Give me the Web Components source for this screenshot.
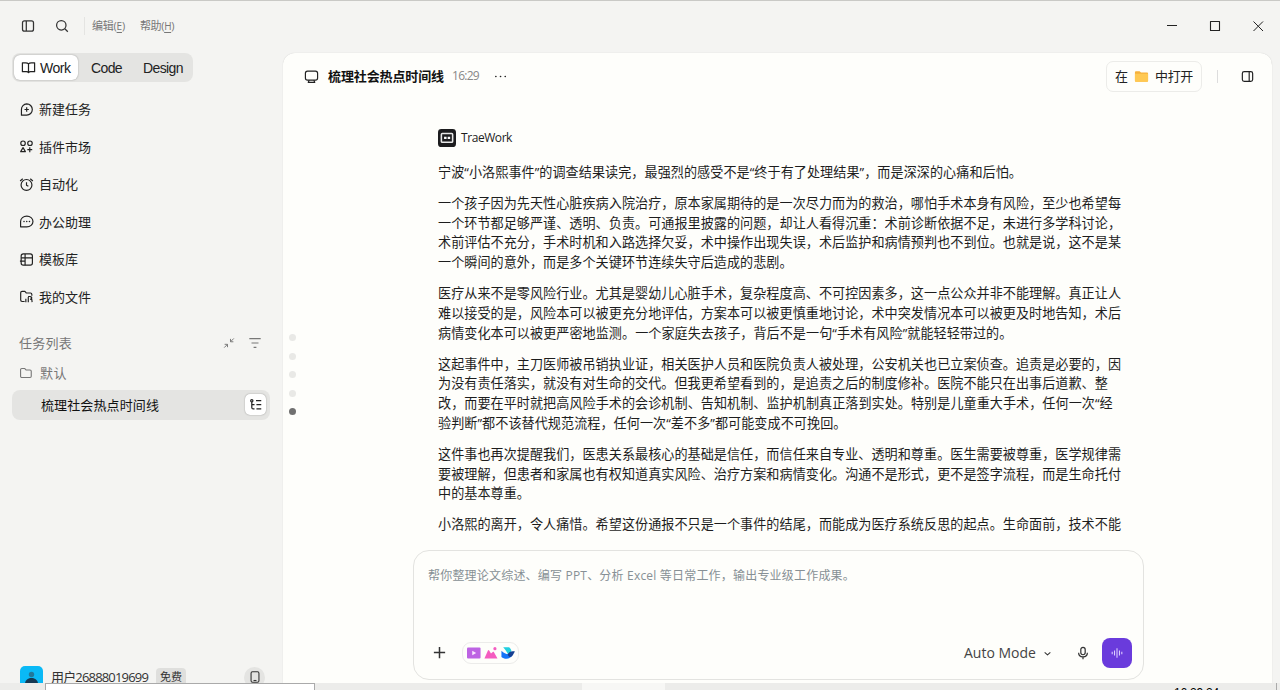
<!DOCTYPE html>
<html lang="zh-CN">
<head>
<meta charset="utf-8">
<title>TraeWork</title>
<style>
html,body{margin:0;height:100%;overflow:hidden}
body{font-family:"Open Sans","Noto Sans CJK SC",sans-serif;font-size:13px;color:#1d1d1d}
</style>
</head>
<body>
<work-app></work-app>
<script>
const define=(name,html,setup)=>customElements.define(name,class extends HTMLElement{
  connectedCallback(){
    if(this.shadowRoot)return;
    const t=document.createElement('template');
    t.innerHTML=typeof html==='function'?html(this):html;
    this.attachShadow({mode:'open'}).append(t.content.cloneNode(true));
    if(setup)setup(this);
  }
});

/* single line of text spaced to a fixed measure */
define('fit-text','<style>:host{display:block;white-space:nowrap;flex:none;line-height:20px}span{display:inline-block;white-space:pre}</style><span><slot></slot></span>',el=>{
  const w=+el.getAttribute('w'),s=el.shadowRoot.querySelector('span');
  el.style.width=w+'px';
  s.style.letterSpacing=(w-s.getBoundingClientRect().width)/[...el.textContent].length+'px';
});

const icons={
panel:'<rect x="2.5" y="2.8" width="11" height="10.4" rx="2"/><path d="M6.3 3v10"/>',
panelR:'<rect x="2.5" y="2.8" width="11" height="10.4" rx="2"/><path d="M9.8 3v10"/>',
search:'<circle cx="7.3" cy="7.3" r="4.7"/><path d="m10.8 10.8 3 3"/>',
book:'<path d="M8 4.2C7.2 3.3 6.2 3 5 3H1.5v9.5h4.3c1 0 1.7.3 2.2.9.5-.6 1.200-.9 2.200-.9h4.300V3H11c-1.200 0-2.200.3-3 1.200zM8 4.200v9"/>',
newtask:'<path d="M8.200 2a6 6 0 1 1 0 12H2.600V8A6 6 0 0 1 8.200 2zM8.200 5.700v4.600M5.900 8h4.600"/>',
plugin:'<circle cx="4.300" cy="4.500" r="2.400"/><circle cx="11.700" cy="4.500" r="2.400"/><path d="m4.300 9.200 2.500 4.300H1.800zM11.500 8.700v5.300M8.900 11.300h5.200"/>',
alarm:'<circle cx="8" cy="8.500" r="5.800"/><path d="M8 5.500v3.200l2 1.200M1.200 4.300 4 1.900M12 1.900l2.800 2.400"/>',
chat:'<path d="M8.300 2.300c3.600 0 6.600 2.400 6.600 5.700s-3 5.700-6.600 5.700H1.700V8c0-3.300 3-5.700 6.600-5.700z"/><path d="M5.300 8h.1M8.200 8h.1M11.100 8h.1" stroke-width="1.500" stroke-linecap="round"/>',
template:'<rect x="2.300" y="2" width="12" height="12" rx="2.300"/><path d="M2.300 6.200h12M6.500 2v12M1 9.700h5.500"/>',
files:'<path d="M6 13.300H3.300A1.500 1.500 0 0 1 1.800 11.800V4a1.500 1.500 0 0 1 1.500-1.500h3l1.600 1.800h4.300c.9 0 1.500.6 1.500 1.500v1.500M7.300 10.500V14M9.900 8.500V14M9.700 8h2.200c2.300 0 2.300 2.600 0 3M12.700 8.500c1 1.500 1.200 3 1.300 5.500"/>',
folder:'<path d="M1.800 11.700V4.200c0-.8.6-1.400 1.400-1.400h3.200l1.600 1.700h4.600c.8 0 1.400.6 1.400 1.400v5.800c0 .8-.6 1.400-1.400 1.400H3.200c-.8 0-1.400-.6-1.400-1.400z"/>',
shrink:'<path d="M13.500 2.800 9.800 6.500M9.700 3.300v3.300H13M2.500 13.300l3.700-3.700M3 9.500h3.300v3.300"/>',
filter:'<path d="M1.500 3h13M4 8h8M6.400 13h3.200"/>',
tree:'<circle cx="3.200" cy="3.200" r="1.300"/><path d="M3.200 4.500v6.300c0 1 .6 1.700 1.600 1.700h1.500M3.200 7.600h3.100M8 3h6M8.500 7.600H14M8.500 12.500H14"/>',
phone:'<rect x="3.500" y="2" width="9" height="12" rx="1.600"/><path d="M6.300 12h3.400"/>',
monitor:'<rect x="1.500" y="2.300" width="13" height="9.600" rx="2.300"/><path d="M4 14.200h8M5.500 11.900l-.8 2M10.500 11.900l.8 2"/>',
dots:'<path d="M3 8h.1M8 8h.1M13 8h.1" stroke-width="1.700" stroke-linecap="round"/>',
plus:'<path d="M8 2v12M2 8h12"/>',
chev:'<path d="m4.500 6.500 3.500 3.300 3.500-3.300"/>',
mic:'<rect x="5.500" y="1.500" width="5" height="8.500" rx="2.500"/><path d="M3 7.700c0 6.200 10 6.200 10 0M8 12.300V15"/>',
min:'<path d="M3 7.500h10"/>',max:'<rect x="3.500" y="3.500" width="9" height="9"/>',close:'<path d="m3.500 3.500 9.500 9.500M13 3.500 3.500 13"/>',
wave:'<path d="M2.500 6.700v2.600M5.200 5.200v5.600M8 2.500v11M10.800 5.200v5.600M13.500 6.700v2.600"/>',
yellow:'<path fill="#f6b13c" stroke="none" d="M1 3.500c0-.6.400-1 1-1h4l1.500 1.300H14c.6 0 1 .4 1 1v7.700c0 .6-.4 1-1 1H2c-.6 0-1-.4-1-1z"/><path fill="#ffc953" stroke="none" d="M1 5h14v7.500c0 .6-.4 1-1 1H2c-.6 0-1-.4-1-1z"/>',
bot:'<rect x="0" y="0" width="16" height="16" rx="3" fill="#1c1c1e" stroke="none"/><rect x="3" y="4" width="10" height="7.800" rx=".8" stroke="#e8e8e8" stroke-width="1.400"/><path d="M5.400 7.900h2.200M8.600 7.900h2.200" stroke="#fff" stroke-width="2"/>',
video:'<rect x="0" y="1.700" width="15.500" height="12.600" rx="1.200" fill="#bd63e3" stroke="none"/><path d="m6 5.400 4.500 2.600L6 10.600z" fill="#fbe9ff" stroke="none"/>',
image:'<path d="M.5 14.300 4.500 5.200c.4-.8 1-.8 1.400 0L8 8.500l2-1.700c.5-.5 1-.4 1.400.2l4 7.300z" fill="#f45cc0" stroke="none"/><circle cx="12.500" cy="3" r="1.800" fill="#f45cc0" stroke="none"/>',
bird:'<path d="M2.500 1.500h6.800c1.700 1.300 2.500 3 2.700 4.700L8 9C6 6.300 4.500 3.500 2.500 1.500z" fill="#21cfe0" stroke="none"/><path d="M.5 5.500c2.500 2.500 5.200 4 8 4L12.500 11.500c-3.500 4.200-9 3.500-12 1z" fill="#1473f8" stroke="none"/><path d="M7.500 9.200c2.500-3 5-4 8.500-2.900-1.800 2-2.200 6.200-5.800 6.200-1.600-.4-2.400-1.600-2.700-3.300z" fill="#153f92" stroke="none"/>'
};
define('ui-icon',el=>`<style>:host{display:block;flex:none;width:${el.getAttribute('s')||16}px;height:${el.getAttribute('s')||16}px}svg{display:block;width:100%;height:100%}</style><svg viewBox="0 0 16 16" fill="none" stroke="currentColor" stroke-width="${el.getAttribute('t')||1.25}" stroke-linejoin="round">${icons[el.getAttribute('n')]}</svg>`);

define('title-bar',`<style>
:host{display:flex;align-items:center;height:52px;padding:0 0 2px 20px;box-sizing:border-box;border-top:1px solid #c9c9c6;color:#333;font-size:11px;background:#f4f4f2;position:relative}
.sep{width:1px;height:18px;background:#e4e4e2;margin:0 7px 0 14px}.menu{color:#777}.menu+.menu{margin-left:15px}
u{text-underline-offset:2px;text-decoration-thickness:1px;font-size:10px}.sp{flex:1}.wins{display:flex;gap:27px;padding-right:14px;color:#222}
</style><ui-icon n="panel"></ui-icon><ui-icon n="search" style="margin-left:18px"></ui-icon><i class="sep"></i><fit-text class="menu" w="33">编辑(<u>E</u>)</fit-text><fit-text class="menu" w="34">帮助(<u>H</u>)</fit-text><i class="sp"></i><div class="wins"><ui-icon n="min" t="1"></ui-icon><ui-icon n="max" t="1.1"></ui-icon><ui-icon n="close" t="1"></ui-icon></div>`);

define('mode-tabs',`<style>
:host{display:flex;width:181px;height:29px;box-sizing:border-box;margin-left:12px;border-radius:8px;background:#e4e4e2;font-family:"Liberation Sans",sans-serif;font-size:14px;color:#222}
div{display:flex;align-items:center}.on{box-sizing:border-box;width:64px;margin:2px 0 2px 2px;padding-left:7px;gap:4px;background:#fff;border-radius:6px;box-shadow:0 0 1.500px #0006}
.c{margin-left:13px}.d{margin-left:21px}
</style><div class="on"><ui-icon n="book" s="15" t="1.3"></ui-icon><fit-text w="30.500">Work</fit-text></div><div class="c"><fit-text w="31">Code</fit-text></div><div class="d"><fit-text w="40">Design</fit-text></div>`);

define('nav-item',el=>`<style>:host{display:flex;align-items:center;height:37.500px;padding-left:19px;gap:5px;color:#222}</style><ui-icon n="${el.getAttribute('icon')}" s="15"></ui-icon><fit-text w="${el.getAttribute('w')}">${el.getAttribute('label')}</fit-text>`);

define('task-list',`<style>
:host{display:block;margin-top:12px;color:#777}.r{display:flex;align-items:center;height:30px;box-sizing:border-box}
.h{padding:0 21px 0 19px}.h i{flex:1}.h ui-icon+ui-icon{margin-left:12px}.f{padding-left:19px;gap:7px;height:31px}
.sel{margin:1px 13px 0 12px;padding:0 4px 0 29px;justify-content:space-between;background:#e4e4e2;border-radius:8px;color:#111}
.b{display:grid;place-items:center;width:21px;height:21px;background:#fff;border-radius:5px;box-shadow:0 0 1.500px #0006;color:#222}
</style><div class="r h"><fit-text w="53">任务列表</fit-text><i></i><ui-icon n="shrink" s="14" t="1.1"></ui-icon><ui-icon n="filter" s="14"></ui-icon></div>
<div class="r f"><ui-icon n="folder" s="14"></ui-icon><fit-text w="27">默认</fit-text></div>
<div class="r sel"><fit-text w="118">梳理社会热点时间线</fit-text><span class="b"><ui-icon n="tree" s="14" t="1.4"></ui-icon></span></div>`);

define('user-bar',`<style>
:host{display:flex;align-items:center;height:22px;padding:0 18px 0 20px;margin-top:auto;margin-bottom:-5px;color:#333}
.a{width:23px;height:22px;border-radius:5px;background:#0ab9f6;margin-right:8px}.a svg{display:block}
.tag{font-size:11px;background:#dfdfdd;border-radius:4px;padding:0 4px;height:18px;margin-left:8px;display:flex;align-items:center}
.p{display:grid;place-items:center;width:21px;height:21px;background:#e4e4e2;border-radius:50%;margin-left:auto}
</style><div class="a"><svg width="23" height="22"><circle cx="11.500" cy="8.500" r="2.700" fill="#22789b"/><path d="M5 18c0-8 13-8 13 0z" fill="#163953"/></svg></div><fit-text w="97">用户26888019699</fit-text><span class="tag"><fit-text w="22">免费</fit-text></span><span class="p"><ui-icon n="phone" s="14"></ui-icon></span>`);

define('side-bar',`<style>:host{display:flex;flex-direction:column;width:283px;box-sizing:border-box;flex:none;padding-top:1px}.n{margin-top:8.600px}</style>
<mode-tabs></mode-tabs><div class="n"><nav-item icon="newtask" w="52" label="新建任务"></nav-item><nav-item icon="plugin" w="52" label="插件市场"></nav-item><nav-item icon="alarm" w="39" label="自动化"></nav-item><nav-item icon="chat" w="52" label="办公助理"></nav-item><nav-item icon="template" w="39" label="模板库"></nav-item><nav-item icon="files" w="52" label="我的文件"></nav-item></div><task-list></task-list><user-bar></user-bar>`);

define('chat-header',`<style>
:host{display:flex;align-items:center;height:46px;padding:0 17px 0 21px;flex:none;color:#222}
b{margin-left:9px;color:#111}.t{font-size:12px;color:#888;margin:0 14px 0 8px}.sp{flex:1}
.open{display:flex;align-items:center;box-sizing:border-box;width:96px;height:31px;border:1px solid #ecece9;border-radius:7px;padding-left:8px;gap:6px}
.v{width:1px;height:13px;background:#ddd;margin:0 22px 0 15px}
</style><ui-icon n="monitor" s="15"></ui-icon><b><fit-text w="116">梳理社会热点时间线</fit-text></b><fit-text class="t" w="27">16:29</fit-text><ui-icon n="dots" s="15"></ui-icon><i class="sp"></i><div class="open"><fit-text w="13">在</fit-text><ui-icon n="yellow" s="15"></ui-icon><fit-text w="38">中打开</fit-text></div><i class="v"></i><ui-icon n="panelR" s="15"></ui-icon>`);

const article=[
['宁波“小洛熙事件”的调查结果读完，最强烈的感受不是“终于有了处理结果”，而是深深的心痛和后怕。'],
['一个孩子因为先天性心脏疾病入院治疗，原本家属期待的是一次尽力而为的救治，哪怕手术本身有风险，至少也希望每','一个环节都足够严谨、透明、负责。可通报里披露的问题，却让人看得沉重：术前诊断依据不足，未进行多学科讨论，','术前评估不充分，手术时机和入路选择欠妥，术中操作出现失误，术后监护和病情预判也不到位。也就是说，这不是某','一个瞬间的意外，而是多个关键环节连续失守后造成的悲剧。'],
['医疗从来不是零风险行业。尤其是婴幼儿心脏手术，复杂程度高、不可控因素多，这一点公众并非不能理解。真正让人','难以接受的是，风险本可以被更充分地评估，方案本可以被更慎重地讨论，术中突发情况本可以被更及时地告知，术后','病情变化本可以被更严密地监测。一个家庭失去孩子，背后不是一句“手术有风险”就能轻轻带过的。'],
['这起事件中，主刀医师被吊销执业证，相关医护人员和医院负责人被处理，公安机关也已立案侦查。追责是必要的，因','为没有责任落实，就没有对生命的交代。但我更希望看到的，是追责之后的制度修补。医院不能只在出事后道歉、整','改，而要在平时就把高风险手术的会诊机制、告知机制、监护机制真正落到实处。特别是儿童重大手术，任何一次“经','验判断”都不该替代规范流程，任何一次“差不多”都可能变成不可挽回。'],
['这件事也再次提醒我们，医患关系最核心的基础是信任，而信任来自专业、透明和尊重。医生需要被尊重，医学规律需','要被理解，但患者和家属也有权知道真实风险、治疗方案和病情变化。沟通不是形式，更不是签字流程，而是生命托付','中的基本尊重。'],
['小洛熙的离开，令人痛惜。希望这份通报不只是一个事件的结尾，而能成为医疗系统反思的起点。生命面前，技术不能']];
const measure=s=>{const q=(s.match(/[“”]/g)||[]).length;return (s.length-q)*13.135+q*4.8};
define('chat-message',`<style>
:host{display:block;flex:1;overflow:hidden;padding:30px 0 0 155px;min-height:0}
.who{display:flex;align-items:center;gap:5px;height:18px;font-size:12px;margin-bottom:15px}.p{margin-bottom:11.050px;font-size:13.100px}.p fit-text{height:19.800px}
</style><div class="who"><ui-icon n="bot" s="18"></ui-icon><fit-text w="51">TraeWork</fit-text></div>${article.map(p=>`<div class="p">${p.map(l=>`<fit-text w="${measure(l)}">${l}</fit-text>`).join('')}</div>`).join('')}`);

define('prompt-box',`<style>
:host{display:flex;flex-direction:column;flex:none;width:731px;height:130px;box-sizing:border-box;margin:0 0 3px 130px;border:1px solid #e3e3e0;border-radius:16px;padding:15px 11px 11px 14px;background:#fefefb}
.ph{color:#879095;font-size:12px}.bar{display:flex;align-items:center;margin-top:auto;color:#333;height:30px}
.chips{display:flex;align-items:center;margin:-1px 0 0 15px;border:1px solid #ececea;border-radius:9px;height:22px;box-sizing:border-box;padding:0 3px 0 4px;gap:3px}
.m{margin-left:auto;font-size:14px;color:#444}.send{display:grid;place-items:center;width:30px;height:30px;border-radius:8px;background:#6a3bdc;color:#e0d2ff;margin-left:12px}
</style><fit-text class="ph" w="427">帮你整理论文综述、编写 PPT、分析 Excel 等日常工作，输出专业级工作成果。</fit-text>
<div class="bar"><ui-icon n="plus" s="15" t="1.6" style="margin:-1px 0 0 4px"></ui-icon><div class="chips"><ui-icon n="video" s="14"></ui-icon><ui-icon n="image" s="14"></ui-icon><ui-icon n="bird" s="14"></ui-icon></div><fit-text class="m" w="72">Auto Mode</fit-text><ui-icon n="chev" s="13" style="margin-left:5px"></ui-icon><ui-icon n="mic" s="14" t="1.4" style="margin-left:22px"></ui-icon><span class="send"><ui-icon n="wave" s="14" t="1.2"></ui-icon></span></div>`);

define('turn-dots',`<style>:host{position:absolute;left:6px;top:281px;display:flex;flex-direction:column;gap:11.600px}i{width:7px;height:7px;border-radius:50%;background:#e9e9e6}i:first-child{background:#f3f3f0}i:last-child{background:#707070}</style><i></i><i></i><i></i><i></i><i></i>`);

define('main-panel',`<style>:host{position:relative;display:flex;flex-direction:column;width:989px;box-sizing:border-box;margin-top:1px;background:#fefefb;border-radius:12px 12px 0 0;box-shadow:0 0 1px #0003}</style><chat-header></chat-header><chat-message></chat-message><prompt-box></prompt-box><turn-dots></turn-dots>`);

define('task-strip',`<style>:host{display:flex;height:7px;overflow:hidden;background:#ececea;position:relative}.w{width:268px;margin-left:45px;background:#fff;border:1px solid #aaa;border-bottom:0}.s{width:83px;margin-left:267px;background:#f7f7f5}fit-text{margin-left:509px;font:12px/20px "Liberation Sans",sans-serif;color:#000}.e{width:1px;margin-left:57px;background:#aaa}</style><i class="w"></i><i class="s"></i><fit-text w="45">16:29:24</fit-text><i class="e"></i>`);

define('work-app',`<style>:host{display:grid;grid-template-rows:52px minmax(0,1fr) 7px;width:1280px;height:690px;overflow:hidden;background:#f4f4f2}.b{display:flex;min-height:0;overflow:hidden}</style><title-bar></title-bar><div class="b"><side-bar></side-bar><main-panel></main-panel></div><task-strip></task-strip>`);
</script>
</body>
</html>
